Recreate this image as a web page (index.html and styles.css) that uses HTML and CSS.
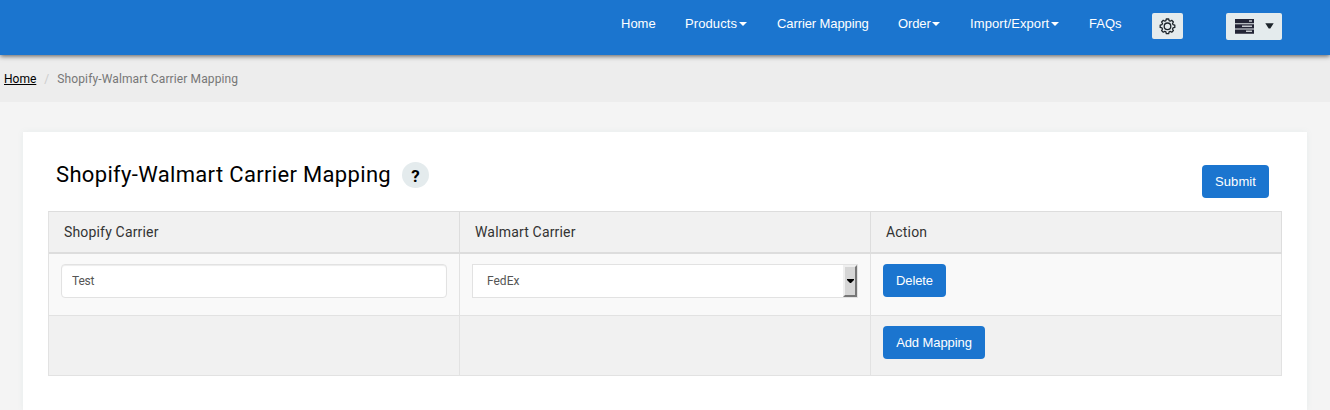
FILE: index.html
```
<!DOCTYPE html>
<html lang="en">
<head>
<meta charset="utf-8">
<title>Shopify-Walmart Carrier Mapping</title>
<link rel="stylesheet" href="styles.css">
</head>
<body>
<header class="navbar">
  <nav class="menu">
    <a class="nav-home">Home</a>
    <a class="nav-products">Products<i class="caret"></i></a>
    <a class="nav-carrier">Carrier Mapping</a>
    <a class="nav-order">Order<i class="caret"></i></a>
    <a class="nav-import">Import/Export<i class="caret"></i></a>
    <a class="nav-faqs">FAQs</a>
  </nav>
  <button class="icon-button gear" aria-label="Settings">
    <svg width="17" height="17" viewBox="0 0 17 17" fill="none" stroke="#1d252b" stroke-width="1.300" stroke-linejoin="round">
      <path d="M7.300 1h2.400l.4 1.700 1.100.5 1.500-.9 1.700 1.700-.9 1.500.5 1.100 1.800.5v2.300l-1.800.5-.5 1.100.9 1.500-1.700 1.700-1.500-.9-1.100.5-.4 1.800H7.300l-.4-1.800-1.100-.5-1.500.9-1.700-1.700.9-1.500-.5-1.100-1.800-.5V7.100l1.800-.5.5-1.100-.9-1.500 1.700-1.700 1.500.9 1.100-.5z"/>
      <circle cx="8.500" cy="8.300" r="3.300"/>
    </svg>
  </button>
  <button class="icon-button server" aria-label="Account">
    <svg width="19" height="15" viewBox="0 0 19 15">
      <path fill="#232536" d="M0 0h19v4.300H0zM0 5.200h19v4.300H0zM0 10.500h19v4.300H0z"/>
      <path fill="#c5c9ce" d="M14 1.200h3v1.600h-3zM7 6.400h10V8H7zM11 11.500h6v1.600h-6z"/>
    </svg>
    <svg class="down" width="9" height="6" viewBox="0 0 9 6"><path fill="#1d252b" d="M.3.3h8.400L5.300 5.500H3.700z"/></svg>
  </button>
</header>
<div class="breadcrumb"><a class="crumb-link">Home</a><span class="slash">/</span><span class="crumb-page">Shopify-Walmart Carrier Mapping</span></div>
<main class="panel">
  <div class="panel-head">
    <h1>Shopify-Walmart Carrier Mapping</h1>
    <span class="help">?</span>
    <button class="btn submit">Submit</button>
  </div>
  <div class="table">
    <div class="row head"><div>Shopify Carrier</div><div>Walmart Carrier</div><div>Action</div></div>
    <div class="row odd">
      <div><input class="field" type="text" value="Test"></div>
      <div><div class="select"><span>FedEx</span><div class="arrow"><svg width="7" height="4" viewBox="0 0 7 4"><path d="M0 0h7v1L4 4H3L0 1z"/></svg></div></div></div>
      <div><button class="btn delete">Delete</button></div>
    </div>
    <div class="row even"><div></div><div></div><div><button class="btn add">Add Mapping</button></div></div>
  </div>
</main>
</body>
</html>
```
FILE: styles.css
```
* { box-sizing: border-box; }
body {
  margin: 0;
  background: #f4f4f4;
  font-family: Roboto, sans-serif;
}
.navbar {
  position: relative;
  display: flex;
  justify-content: flex-end;
  align-items: flex-start;
  height: 55px;
  padding: 13px 48px 0 0;
  background: #1b75cf;
  box-shadow: 0 1px 5px rgba(0, 0, 0, .65);
}
.menu {
  display: flex;
  gap: 30px;
  padding-top: 1px;
  margin-right: 30px;
  font: 13px/20px "Liberation Sans", Arial, sans-serif;
  color: #fff;
}
.menu a {
  display: flex;
  align-items: center;
  justify-content: space-between;
  height: 20px;
  white-space: nowrap;
}
.nav-home { width: 34px; }
.nav-products { width: 62px; letter-spacing: .1px; }
.nav-carrier { width: 91px; letter-spacing: -.1px; }
.nav-order { width: 42px; letter-spacing: -.1px; }
.nav-import { width: 89px; letter-spacing: .1px; }
.nav-faqs { width: 33px; }
.caret {
  border: 4px solid transparent;
  border-top-color: #fff;
  border-bottom: 0;
}
.icon-button {
  display: flex;
  align-items: center;
  justify-content: center;
  border: 0;
  border-radius: 2px;
  padding: 0;
  background: #e4ebed;
}
.gear { width: 31px; height: 26px; margin-right: 43px; }
.server { width: 56px; height: 27px; gap: 11px; }
.down { margin-bottom: 1px; }
.breadcrumb {
  display: flex;
  height: 47px;
  padding: 14px 4px 0;
  background: #ededed;
  font-size: 12px;
  line-height: 20px;
  color: #777;
}
.crumb-link { color: #000; text-decoration: underline; }
.crumb-page { letter-spacing: .12px; }
.slash { width: 21px; text-align: center; color: #ccc; }
.panel {
  height: 278px;
  margin: 30px 23px 0;
  padding: 0 25px;
  background: #fff;
  box-shadow: 0 0 6px #e7ecec;
}
.panel-head { display: flex; height: 79px; padding: 0 13px 0 8px; }
h1 {
  margin: 28px 11px 0 0;
  font-size: 22px;
  line-height: 30px;
  font-weight: 400;
  color: #000;
  letter-spacing: .33px;
  white-space: nowrap;
}
.help {
  width: 27px;
  height: 26px;
  margin-top: 30px;
  border-radius: 50%;
  background: #e4ebed;
  color: #000;
  font-size: 17px;
  font-weight: 700;
  line-height: 28px;
  text-align: center;
}
.btn {
  display: block;
  height: 33px;
  padding: 0;
  border: 0;
  border-radius: 4px;
  background: #1b75cf;
  color: #fff;
  font: 13px/33px "Liberation Sans", Arial, sans-serif;
  white-space: nowrap;
}
.submit { width: 67px; margin: 33px 0 0 auto; letter-spacing: .1px; }
.delete { width: 63px; letter-spacing: -.1px; }
.add { width: 102px; letter-spacing: -.08px; }
.table { border-left: 1px solid #e2e2e2; border-top: 1px solid #ddd; }
.row { display: grid; grid-template-columns: repeat(3, 411px); }
.row > div { padding: 10px 12px; border-right: 1px solid #e2e2e2; border-bottom: 1px solid #e2e2e2; }
.row.head > div {
  height: 42px;
  padding: 0 15px;
  border-right-color: #ddd;
  border-bottom: 2px solid #ddd;
  background: #f1f1f1;
  color: #333;
  font-size: 14px;
  line-height: 40px;
  letter-spacing: .17px;
}
.odd > div { height: 62px; background: #f9f9f9; }
.even > div { height: 60px; background: #f1f1f1; }
.field, .select {
  display: flex;
  width: 386px;
  height: 34px;
  border: 1px solid #e2e2e2;
  background: #fff;
  color: #555;
  font: 12px/32px Roboto, sans-serif;
}
.field { padding: 0 10px; border-radius: 4px; letter-spacing: -.2px; box-shadow: inset 0 1px 1px rgba(0, 0, 0, .075); }
.select { justify-content: space-between; padding-left: 14px; }
.arrow {
  display: flex;
  align-items: center;
  justify-content: center;
  width: 14px;
  border: 2px solid #efefef;
  border-right-color: #777;
  border-bottom-color: #777;
  background: #d6d6d6;
}
```
